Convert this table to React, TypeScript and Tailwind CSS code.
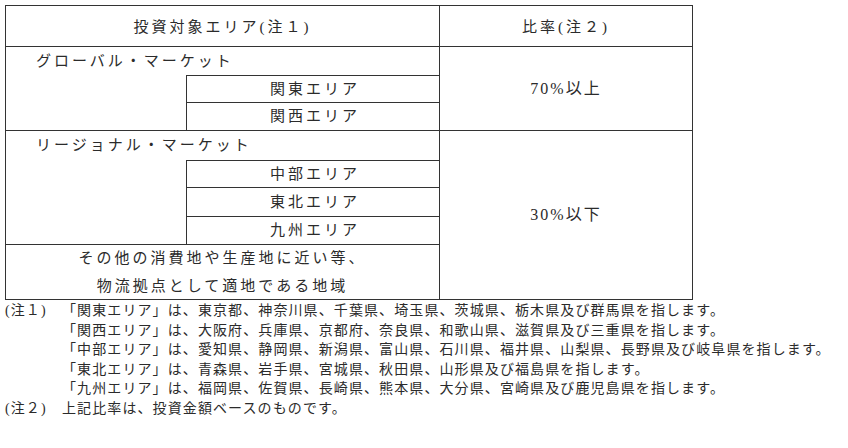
const FONT = "font-['Liberation_Serif','Noto_Sans_CJK_JP',serif]";

const notes1 = [
  "「関東エリア」は、東京都、神奈川県、千葉県、埼玉県、茨城県、栃木県及び群馬県を指します。",
  "「関西エリア」は、大阪府、兵庫県、京都府、奈良県、和歌山県、滋賀県及び三重県を指します。",
  "「中部エリア」は、愛知県、静岡県、新潟県、富山県、石川県、福井県、山梨県、長野県及び岐阜県を指します。",
  "「東北エリア」は、青森県、岩手県、宮城県、秋田県、山形県及び福島県を指します。",
  "「九州エリア」は、福岡県、佐賀県、長崎県、熊本県、大分県、宮崎県及び鹿児島県を指します。",
];

export default function App() {
  return (
    <div className={`min-h-[448px] w-[848px] bg-white pl-[5px] pt-[5px] text-[#2b2b2b] ${FONT}`}>
      {/* 表 */}
      <div className="grid w-[688px] grid-cols-[181px_253px_253px] grid-rows-[41px_28px_28px_28px_29px_28px_29px_28px_55px] border-l border-t border-[#333] text-[15px] tracking-[3px]">
        <div className="col-span-2 col-start-1 row-start-1 flex items-center justify-center border-b border-r border-[#333] pt-[3px]">
          投資対象エリア(注１)
        </div>
        <div className="col-start-3 row-start-1 flex items-center justify-center border-b border-r border-[#333] pt-[3px]">
          比率(注２)
        </div>

        <div className="col-span-2 col-start-1 row-start-2 flex items-center border-r border-[#333] pl-[30px]">
          グローバル・マーケット
        </div>
        <div className="col-start-1 row-span-2 row-start-3 border-b border-r border-[#333]" />
        <div className="col-start-2 row-start-3 flex items-center justify-center border-b border-r border-t border-[#333] pl-[4px]">
          関東エリア
        </div>
        <div className="col-start-2 row-start-4 flex items-center justify-center border-b border-r border-[#333] pl-[4px]">
          関西エリア
        </div>
        <div className="col-start-3 row-span-3 row-start-2 flex items-center justify-center border-b border-r border-[#333] text-[16px] tracking-[2px]">
          70%以上
        </div>

        <div className="col-span-2 col-start-1 row-start-5 flex items-center border-r border-[#333] pl-[30px]">
          リージョナル・マーケット
        </div>
        <div className="col-start-1 row-span-3 row-start-6 border-b border-r border-[#333]" />
        <div className="col-start-2 row-start-6 flex items-center justify-center border-b border-r border-t border-[#333] pl-[4px]">
          中部エリア
        </div>
        <div className="col-start-2 row-start-7 flex items-center justify-center border-b border-r border-[#333] pl-[4px]">
          東北エリア
        </div>
        <div className="col-start-2 row-start-8 flex items-center justify-center border-b border-r border-[#333] pl-[4px]">
          九州エリア
        </div>
        <div className="col-span-2 col-start-1 row-start-9 flex flex-col items-center justify-center border-b border-r border-[#333] leading-[28px]">
          <span>その他の消費地や生産地に近い等、</span>
          <span>物流拠点として適地である地域</span>
        </div>
        <div className="col-start-3 row-span-5 row-start-5 flex items-center justify-center border-b border-r border-[#333] text-[16px] tracking-[2px]">
          30%以下
        </div>
      </div>

      {/* 注記 */}
      <div className="grid grid-cols-[57px_1fr] whitespace-nowrap pt-[1px] text-[14px] leading-[19.6px] tracking-[1.1px]">
        <div className="col-start-1 row-start-1">(注１)</div>
        <div className="col-start-2 row-start-1 flex flex-col">
          {notes1.map((n) => (
            <span key={n}>{n}</span>
          ))}
        </div>
        <div className="col-start-1 row-start-2">(注２)</div>
        <div className="col-start-2 row-start-2">上記比率は、投資金額ベースのものです。</div>
      </div>
    </div>
  );
}
